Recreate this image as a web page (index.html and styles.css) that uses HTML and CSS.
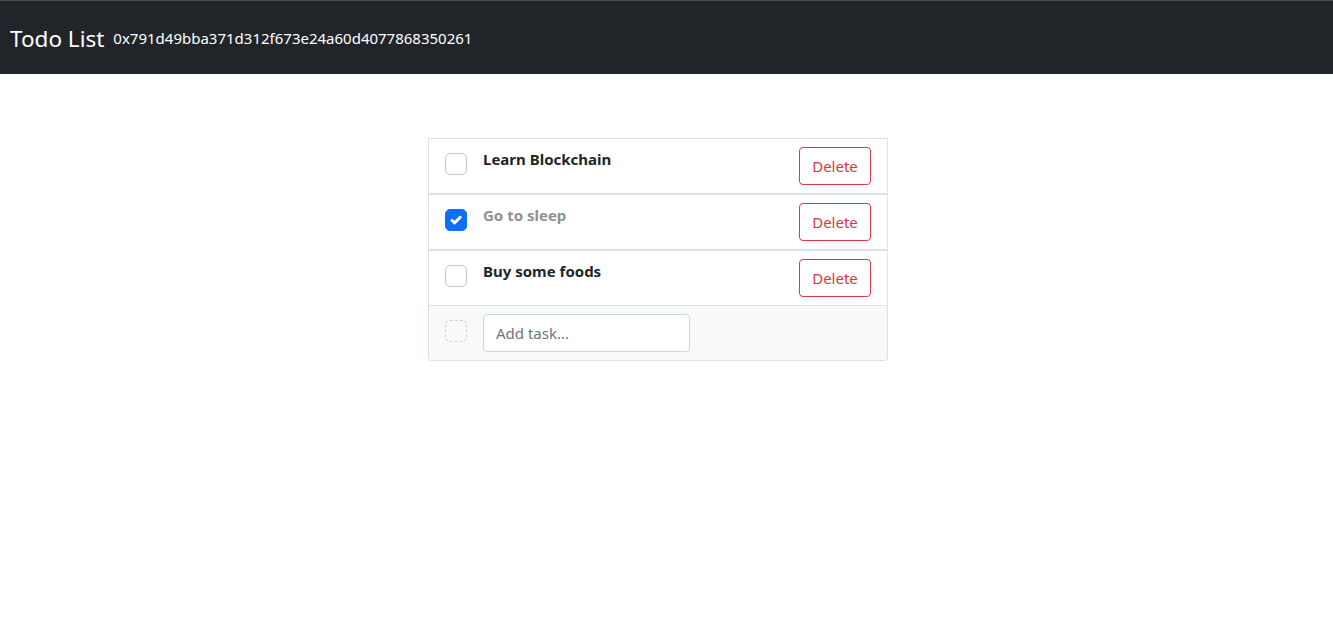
FILE: index.html
```html
<!DOCTYPE html>
<html>
<head>
<meta charset="utf-8">
<title>Todo List</title>
<link rel="stylesheet" href="styles.css">
</head>
<body>
<nav class="navbar">
  <span class="brand">Todo List</span>
  <span class="account">0x791d49bba371d312f673e24a60d4077868350261</span>
</nav>
<main class="content">
  <ul class="todo-list">
    <li class="todo-item">
      <span class="check"></span>
      <span class="task">Learn Blockchain</span>
      <button class="btn-delete">Delete</button>
    </li>
    <li class="todo-item">
      <span class="check checked"><svg viewBox="0 0 20 20" width="22" height="22"><path d="M6 10.3l2.6 2.6L14.2 7.3" fill="none" stroke="#fff" stroke-width="3" stroke-linecap="round" stroke-linejoin="round"/></svg></span>
      <span class="task done">Go to sleep</span>
      <button class="btn-delete">Delete</button>
    </li>
    <li class="todo-item">
      <span class="check"></span>
      <span class="task">Buy some foods</span>
      <button class="btn-delete">Delete</button>
    </li>
    <li class="todo-footer">
      <span class="check placeholder"></span>
      <input class="add-input" type="text" placeholder="Add task...">
    </li>
  </ul>
</main>
</body>
</html>
```
FILE: styles.css
```css
* { box-sizing: border-box; }
html, body { margin: 0; padding: 0; }
body {
  font-family: "Noto Sans", "Open Sans", sans-serif;
  color: #212529;
  background: #fff;
}
.navbar {
  display: flex;
  align-items: center;
  height: 74px;
  background: #212529;
  border-top: 1px solid #4a4d51;
  padding: 2px 10px 0;
  color: #fff;
}
.brand {
  font-size: 22.5px;
  margin-right: 9px;
}
.account {
  font-size: 15px;
  margin-top: -2px;
}
.content {
  display: flex;
  justify-content: center;
  padding-top: 64px;
  padding-right: 17px;
}
.todo-list {
  list-style: none;
  margin: 0;
  padding: 0;
  width: 460px;
}
.todo-item {
  display: flex;
  align-items: flex-start;
  border: 1px solid #dee2e6;
  padding: 8px 16px;
  height: 56px;
}
.check {
  flex: none;
  width: 22px;
  height: 22px;
  border: 1px solid #c4c6c8;
  border-radius: 5px;
  margin-top: 6px;
  margin-right: 16px;
  background: #fff;
  display: flex;
  align-items: center;
  justify-content: center;
}
.check.checked {
  background: #0d6efd;
  border-color: #0d6efd;
}
.check.checked svg { display: block; }
.check.placeholder {
  border: 1px dashed #cfd1d3;
  background: transparent;
  margin-top: 6px;
}
.task {
  flex: 1;
  font-size: 15px;
  font-weight: 700;
  line-height: 22px;
  padding-top: 1px;
}
.task.done { color: #8f9194; }
.btn-delete {
  flex: none;
  width: 72px;
  height: 38px;
  font-family: inherit;
  font-size: 15px;
  color: #dc3545;
  background: #fff;
  border: 1px solid #dc3545;
  border-radius: 4px;
  padding: 0;
}
.todo-footer {
  display: flex;
  align-items: flex-start;
  background: #f8f9fa;
  border: 1px solid #dee2e6;
  border-top: none;
  border-radius: 0 0 4px 4px;
  padding: 8px 16px;
  height: 55px;
}
.add-input {
  width: 207px;
  height: 38px;
  border: 1px solid #ced4da;
  border-radius: 4px;
  padding: 6px 12px;
  font-family: inherit;
  font-size: 15px;
  color: #212529;
  background: #fff;
}
.add-input::placeholder { color: #6c757d; }
```
